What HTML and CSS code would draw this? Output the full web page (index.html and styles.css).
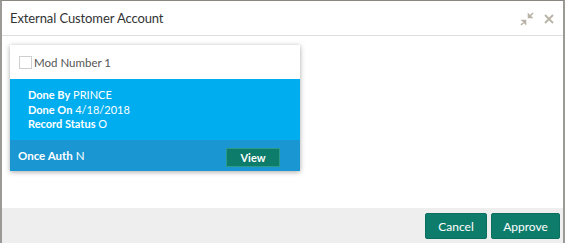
FILE: index.html
```html
<!DOCTYPE html>
<html>
<head>
<meta charset="utf-8">
<link rel="stylesheet" href="styles.css">
</head>
<body>
<div class="dialog">
  <div class="header">
    <div class="title">External Customer Account</div>
    <div class="tools">
      <svg class="icon" width="14" height="14" viewBox="0 0 14 14">
        <path d="M1 13 L5 9 M2.5 8.5 L5.5 8.5 L5.5 11.5 Z" stroke="#b9b2a6" stroke-width="1.6" fill="#b9b2a6"/>
        <path d="M13 1 L9 5 M8.5 2.5 L8.5 5.5 L11.5 5.5 Z" stroke="#b9b2a6" stroke-width="1.6" fill="#b9b2a6"/>
      </svg>
      <svg class="icon" width="10" height="10" viewBox="0 0 10 10">
        <path d="M1 1 L9 9 M9 1 L1 9" stroke="#b9b2a6" stroke-width="1.8"/>
      </svg>
    </div>
  </div>
  <div class="body">
    <div class="card">
      <div class="card-top">
        <span class="check"></span>
        <span class="mod">Mod Number 1</span>
      </div>
      <div class="card-info">
        <div><b>Done By</b> PRINCE</div>
        <div><b>Done On</b> 4/18/2018</div>
        <div><b>Record Status</b> O</div>
      </div>
      <div class="card-foot">
        <div><b>Once Auth</b> N</div>
        <button class="view">View</button>
      </div>
    </div>
  </div>
  <div class="footer">
    <button class="btn">Cancel</button>
    <button class="btn">Approve</button>
  </div>
</div>
</body>
</html>
```
FILE: styles.css
```css
html, body {
  margin: 0;
  padding: 0;
  background: #ffffff;
}
body {
  font-family: Lato, "Liberation Sans", sans-serif;
  width: 566px;
  height: 243px;
  overflow: hidden;
}
.dialog {
  box-sizing: border-box;
  width: 565px;
  height: 243px;
  border-left: 2px solid #9c9a96;
  border-right: 2px solid #9c9a96;
  border-top: 1px solid #8a8680;
  display: flex;
  flex-direction: column;
}
.header {
  height: 34px;
  border-bottom: 1px solid #dedede;
  display: flex;
  align-items: center;
  justify-content: space-between;
  padding: 0 9px 0 8px;
}
.title {
  font-size: 13px;
  color: #333;
  letter-spacing: -0.1px;
}
.tools {
  display: flex;
  align-items: center;
  gap: 10px;
  padding-top: 2px;
}
.icon { display: block; }
.body {
  flex: 1;
  padding: 9px 8px;
}
.card {
  width: 290px;
  box-shadow: 0 1px 5px rgba(0,0,0,0.35);
  background: #fff;
}
.card-top {
  height: 34px;
  display: flex;
  align-items: center;
  padding-left: 9px;
  gap: 2px;
}
.check {
  width: 11px;
  height: 11px;
  border: 1px solid #cfcfcf;
  display: inline-block;
}
.mod {
  font-size: 11.5px;
  color: #555;
}
.card-info {
  box-sizing: border-box;
  background: #00aeef;
  color: #fff;
  font-size: 11px;
  line-height: 14.5px;
  padding: 9px 18px 0;
  height: 61px;
}
.card-info b { font-weight: 700; }
.card-foot {
  background: #1a96d2;
  color: #fff;
  font-size: 11.5px;
  height: 31px;
  display: flex;
  align-items: center;
  justify-content: space-between;
  padding: 0 20px 0 8px;
}
.view {
  width: 54px;
  height: 19px;
  background: #0e7c6b;
  border: 1px solid #2c9a88;
  color: #fff;
  font-family: Lato, "Liberation Sans", sans-serif;
  font-weight: 700;
  font-size: 11px;
  padding: 0;
  margin-top: 3px;
}
.footer {
  height: 35px;
  background: #eeeeee;
  display: flex;
  justify-content: flex-end;
  align-items: center;
  gap: 4px;
  padding-right: 3px;
}
.btn {
  height: 26px;
  padding: 0;
  background: #0e7c6b;
  border: 1px solid #0b6f60;
  border-radius: 2px;
  color: #fff;
  font-family: Lato, "Liberation Sans", sans-serif;
  font-size: 12px;
  margin-top: 1px;
}
.btn:first-child { width: 62px; }
.btn:last-child { width: 69px; }
```
